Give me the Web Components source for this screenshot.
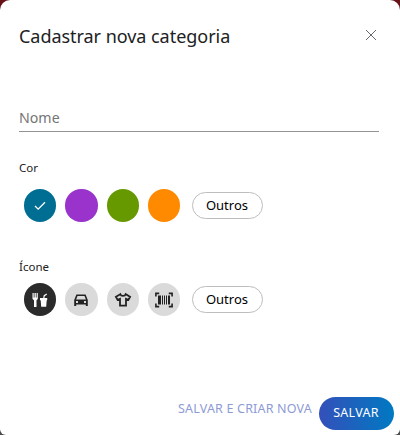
<!DOCTYPE html>
<html lang="pt-BR">
<head>
<meta charset="utf-8">
<title>Cadastrar nova categoria</title>
<style>
html,body{margin:0;height:100%}
body{background:linear-gradient(#681116 0 50%,#4b4b4b 50%);font-family:"Noto Sans","Open Sans",sans-serif;overflow:hidden}
</style>
</head>
<body>
<category-dialog></category-dialog>
<script>
const define = (name, html) => customElements.define(name, class extends HTMLElement {
  constructor() {
    super();
    this.attachShadow({ mode: 'open' }).innerHTML = html;
  }
});

define('dialog-header', `<style>
:host{display:flex;justify-content:space-between;align-items:flex-start;height:95px;padding:23px 23px 0 19px;box-sizing:border-box}
h1{margin:0;font-size:18px;font-weight:400;line-height:26px;color:#212121;letter-spacing:-.04px}
svg{display:block;margin-top:6px}
</style><h1><slot></slot></h1>
<svg width="12" height="12" viewBox="0 0 12 12" fill="none" stroke="#666970" stroke-width="1"><path d="M1 1l10 10M11 1L1 11"/></svg>`);

define('text-field', `<style>
:host{display:block;margin:0 21px 0 19px;height:37px;padding-top:12px;box-sizing:border-box;border-bottom:1px solid #949494}
label{display:block;font-size:14.2px;line-height:22px;color:#757575}
</style><label><slot></slot></label>`);

define('option-group', `<style>
:host{display:block;padding-left:19px}
.label{font-size:11.5px;line-height:16px;color:#212121}
.row{display:flex;align-items:center;gap:9px;padding-left:5px;height:33px;margin-top:var(--row-gap)}
</style><div class="label"><slot name="label"></slot></div><div class="row"><slot></slot></div>`);

define('round-option', `<style>
:host{display:flex;align-items:center;justify-content:center;width:32.3px;height:32.6px;border-radius:50%;background:var(--fill,#dadada);color:var(--ink,#222);flex:none}
</style><slot></slot>`);

define('pill-button', `<style>
:host{display:block;margin-left:2.8px}
button{display:block;width:71px;height:27px;padding:0 1px 0 0;border:1px solid #bdbdbd;border-radius:14px;background:#fff;color:#000;font:13px/25px "Noto Sans",sans-serif}
</style><button><slot></slot></button>`);

define('dialog-actions', `<style>
:host{display:flex;justify-content:flex-end;align-items:center;gap:7px;padding:0 6px 5px 0;margin-top:auto}
button{border:0;padding:0;background:none;font:12.5px/20px "Noto Sans",sans-serif;white-space:nowrap}
.second{color:#8d9bd5;padding-bottom:10px;letter-spacing:.19px}
.main{width:75px;height:33px;border-radius:17px;color:#fff;padding:0 1px 2px 0;letter-spacing:.3px;background:linear-gradient(90deg,#3450ba,#0079c2)}
</style><button class="second"><slot name="second"></slot></button><button class="main"><slot></slot></button>`);

define('category-dialog', `<style>
:host{display:flex;flex-direction:column;height:435px;box-sizing:border-box;background:#fff;border-radius:10px 10px 6px 6px}
svg{display:block}
</style>
<dialog-header>Cadastrar nova categoria</dialog-header>
<text-field>Nome</text-field>
<option-group style="margin-top:28px;--row-gap:13px"><span slot="label">Cor</span>
<round-option style="--fill:#006e93;--ink:#fff"><svg width="12" height="10" viewBox="0 0 12 10" fill="none" stroke="currentColor" stroke-width="1.3"><path d="M1 5l3.200 3.200L11 1.300"/></svg></round-option>
<round-option style="--fill:#9933cc"></round-option>
<round-option style="--fill:#669900"></round-option>
<round-option style="--fill:#ff8a00"></round-option>
<pill-button>Outros</pill-button></option-group>
<option-group style="margin-top:37px;--row-gap:8px"><span slot="label">Ícone</span>
<round-option style="--fill:#2b2b2b;--ink:#fff"><svg width="16" height="16" viewBox="0 0 16 16" fill="currentColor"><path d="M.5 1h1.200v4.500h.8V1h1.300v4.500h.8V1h1.200v6L4.500 8.300V15H2V8.300L.5 7zM8 6h3.200l.5-2.800L14.500 1.600l.5 1.100-2.200 1.200L12.400 6h2.800v2.200h-.5L14.200 14.700H9.200L8.700 8.200H8z"/></svg></round-option>
<round-option><svg width="16" height="16" viewBox="0 0 16 16"><path fill="currentColor" fill-rule="evenodd" d="M3.400 2.500h9.200L14.800 8v6h-2v-1.500H3.200V14h-2V8zM4.500 4L3.100 7.500h9.800L11.500 4zM3 9v2h2V9zm8 0v2h2V9z"/></svg></round-option>
<round-option><svg width="18" height="16" viewBox="0 0 18 16" fill="none" stroke="currentColor" stroke-width="1.800"><path d="M6.300 2.200L1.900 4.800l1.700 3L6 6.800v6.800h6V6.800l2.400 1 1.700-3-4.400-2.600C11 4.500 7 4.500 6.300 2.200z"/></svg></round-option>
<round-option><svg width="18" height="16" viewBox="0 0 18 16"><path fill="none" stroke="currentColor" stroke-width="1.600" d="M.9 4.500V1.400h3.300M13.800 1.400h3.300v3.100M.9 11.500v3.100h3.300M13.800 14.600h3.300v-3.100"/><path fill="currentColor" d="M3 3.500h3v9H3zm4 0h1v9H7zm2 0h1v9H9zm2 0h1v9h-1zm2 0h2v9h-2z"/></svg></round-option>
<pill-button>Outros</pill-button></option-group>
<dialog-actions><span slot="second">SALVAR E CRIAR NOVA</span>SALVAR</dialog-actions>`);
</script>
</body>
</html>
